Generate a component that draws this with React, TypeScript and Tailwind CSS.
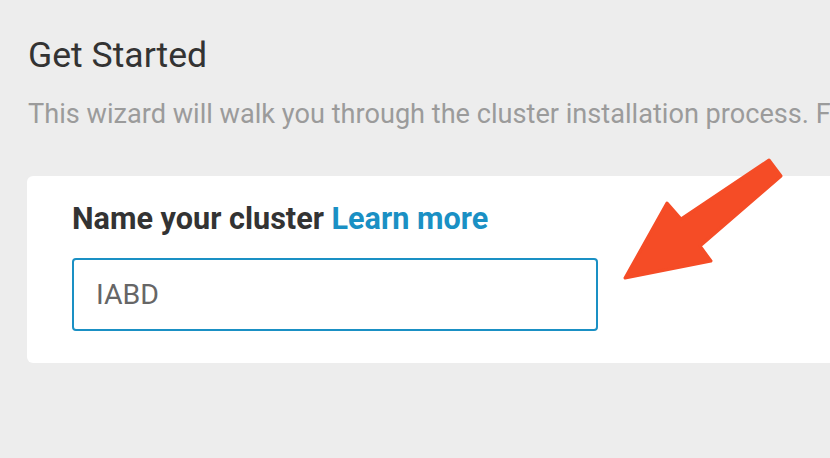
export default function App() {
  return (
    <div
      className="relative w-[830px] h-[458px] overflow-hidden bg-[#ededed]"
      style={{ fontFamily: "Roboto, 'Liberation Sans', sans-serif" }}
    >
      <div className="pl-[28px] pt-[34px]">
        <h1 className="text-[35.6px] leading-[42px] font-normal text-[#333333] whitespace-nowrap">
          Get Started
        </h1>
        <p className="mt-[22px] text-[27.15px] leading-[32px] text-[#9b9b9b] whitespace-nowrap">
          This wizard will walk you through the cluster installation process. First, name your cluster.
        </p>
      </div>

      <div className="ml-[27px] mt-[46px] w-[840px] bg-white rounded-[6px] pl-[45px] pt-[26px] pb-[32px]">
        <label className="block text-[30.6px] leading-[34px] font-bold text-[#333333] whitespace-nowrap">
          Name your cluster <a className="text-[#1a90c4] cursor-pointer">Learn more</a>
        </label>
        <input
          defaultValue="IABD"
          className="mt-[22px] block w-[526px] h-[73px] rounded-[4px] border-2 border-[#1a90c4] bg-white pl-[22px] text-[28.5px] text-[#666666] outline-none"
        />
      </div>

      <svg
        className="absolute left-0 top-0 pointer-events-none"
        width="830"
        height="458"
        viewBox="0 0 830 458"
      >
        <polygon
          points="625,278 667,203 681,219 769,160 781,176 700,246 711,261"
          fill="#f54c26"
          stroke="#f54c26"
          strokeWidth="3"
          strokeLinejoin="round"
        />
      </svg>
    </div>
  );
}
